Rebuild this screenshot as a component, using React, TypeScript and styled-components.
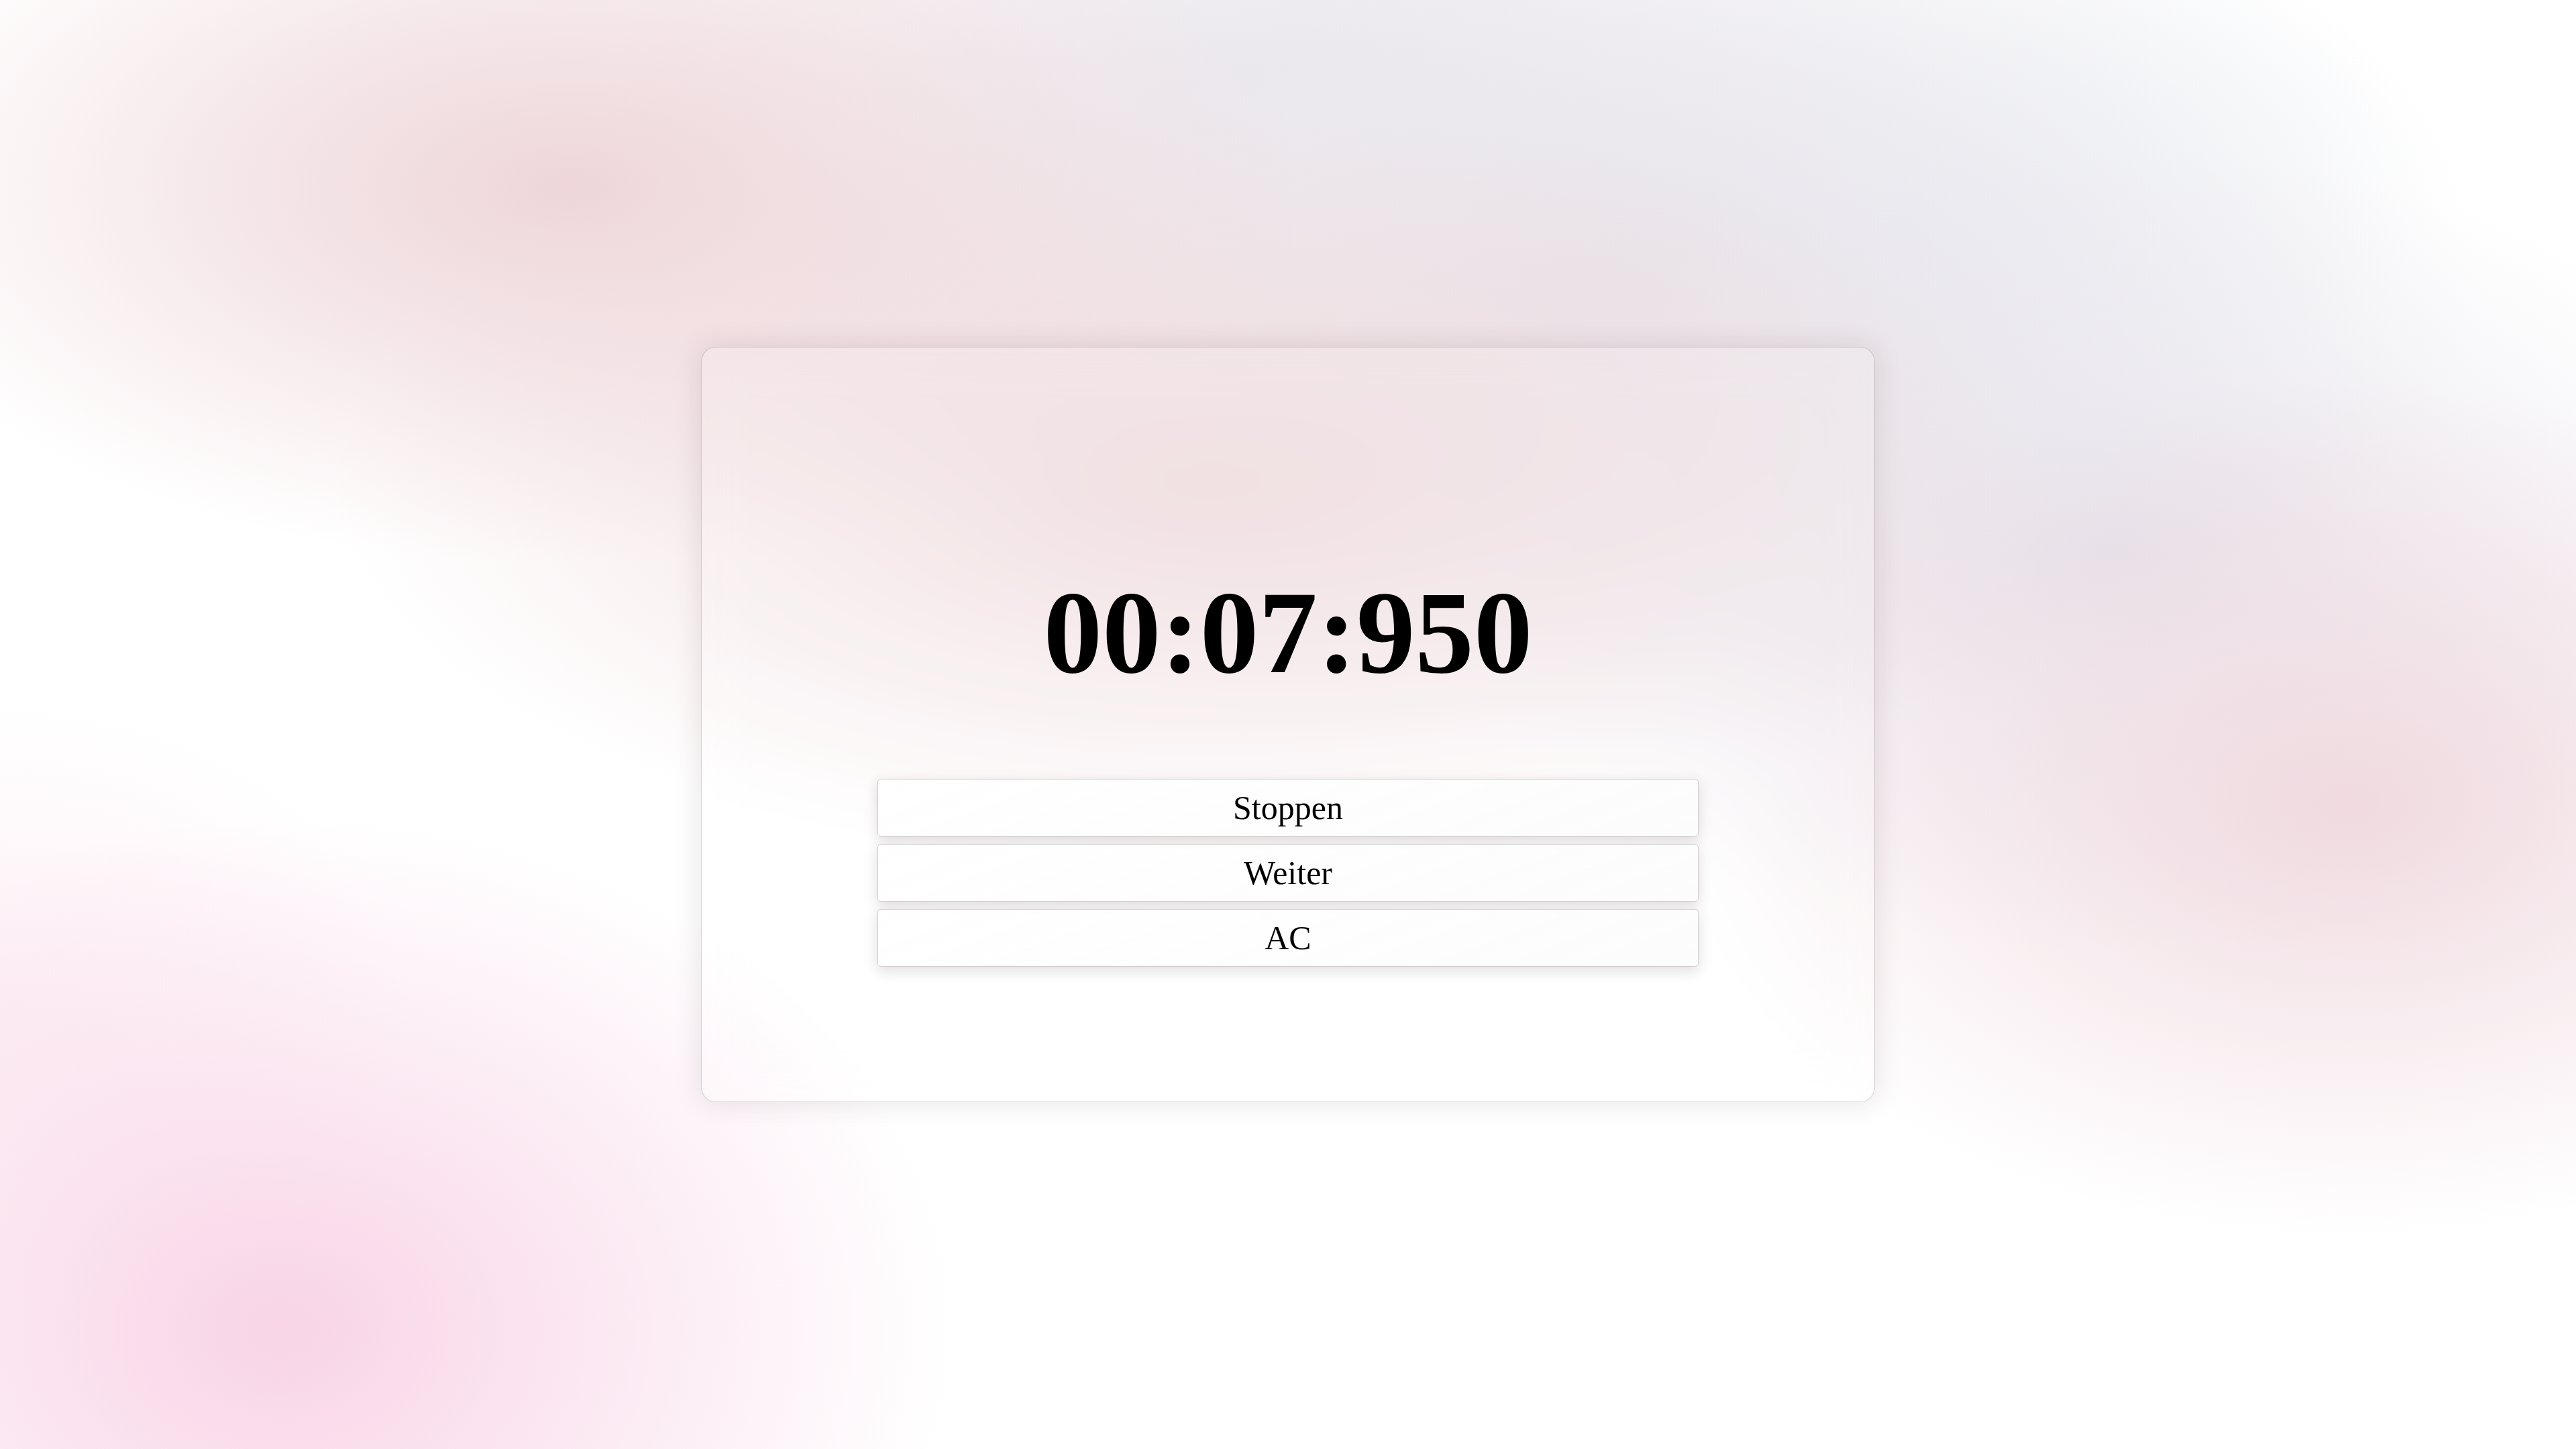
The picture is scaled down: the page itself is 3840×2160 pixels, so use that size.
import styled, { createGlobalStyle } from "styled-components";

const GlobalStyle = createGlobalStyle`
  html, body {
    margin: 0;
    padding: 0;
  }
  body {
    min-height: 100vh;
    background-color: #ffffff;
    background-image:
      radial-gradient(ellipse 1000px 760px at 420px 1980px, rgba(248, 212, 230, 1) 0%, rgba(249, 218, 234, 0.7) 40%, rgba(255, 255, 255, 0) 100%),
      radial-gradient(ellipse 600px 450px at 0px 1500px, rgba(252, 234, 241, 0.7) 0%, rgba(252, 234, 241, 0) 100%),
      radial-gradient(ellipse 1000px 640px at 3500px 1200px, rgba(240, 218, 224, 1) 0%, rgba(240, 218, 224, 0.6) 40%, rgba(240, 218, 224, 0) 100%),
      radial-gradient(ellipse 1100px 560px at 850px 280px, rgba(238, 214, 218, 1) 0%, rgba(238, 214, 218, 0.6) 45%, rgba(238, 214, 218, 0) 100%),
      radial-gradient(ellipse 1300px 560px at 1800px 720px, rgba(240, 220, 223, 1) 0%, rgba(240, 220, 223, 0.6) 45%, rgba(240, 220, 223, 0) 100%),
      radial-gradient(ellipse 1000px 600px at 3150px 820px, rgba(229, 227, 235, 1) 0%, rgba(229, 227, 235, 0.5) 45%, rgba(229, 227, 235, 0) 100%),
      radial-gradient(ellipse 1300px 700px at 2400px 420px, rgba(231, 228, 234, 1) 0%, rgba(231, 228, 234, 0.6) 45%, rgba(231, 228, 234, 0) 100%),
      radial-gradient(ellipse 1000px 460px at 1900px 100px, rgba(237, 235, 240, 1) 0%, rgba(237, 235, 240, 0) 100%),
      radial-gradient(ellipse 700px 380px at 2950px 260px, rgba(242, 246, 250, 1) 0%, rgba(242, 246, 250, 0) 100%);
    font-family: "Liberation Serif", "Times New Roman", serif;
  }
`;

const Page = styled.main`
  min-height: 100vh;
  display: flex;
  align-items: center;
  justify-content: center;
`;

const Card = styled.section`
  width: 1750px;
  height: 1126px;
  box-sizing: border-box;
  display: flex;
  flex-direction: column;
  align-items: center;
  justify-content: center;
  border: 1px solid rgba(120, 100, 105, 0.28);
  border-radius: 22px;
  background: rgba(255, 255, 255, 0.12);
  backdrop-filter: blur(30px);
  box-shadow: 0 0 40px rgba(80, 50, 60, 0.14);
`;

const Zeit = styled.h1`
  margin: 124px 0 117px;
  font-size: 175px;
  font-weight: 700;
  line-height: normal;
  color: #000000;
`;

const Knoepfe = styled.div`
  width: 70%;
  display: flex;
  flex-direction: column;
  gap: 11px;
`;

const Knopf = styled.button`
  height: 86px;
  border: 1px solid #cfcbcb;
  border-radius: 5px;
  background: linear-gradient(160deg, rgba(255, 255, 255, 0.9), rgba(253, 252, 252, 0.96));
  box-shadow: 0 6px 20px rgba(60, 40, 45, 0.16);
  font-family: "Liberation Serif", "Times New Roman", serif;
  font-size: 50px;
  color: #000000;
  cursor: pointer;
`;

export default function App() {
  return (
    <>
      <GlobalStyle />
      <Page>
        <Card>
          <Zeit>00:07:950</Zeit>
          <Knoepfe>
            <Knopf>Stoppen</Knopf>
            <Knopf>Weiter</Knopf>
            <Knopf>AC</Knopf>
          </Knoepfe>
        </Card>
      </Page>
    </>
  );
}
